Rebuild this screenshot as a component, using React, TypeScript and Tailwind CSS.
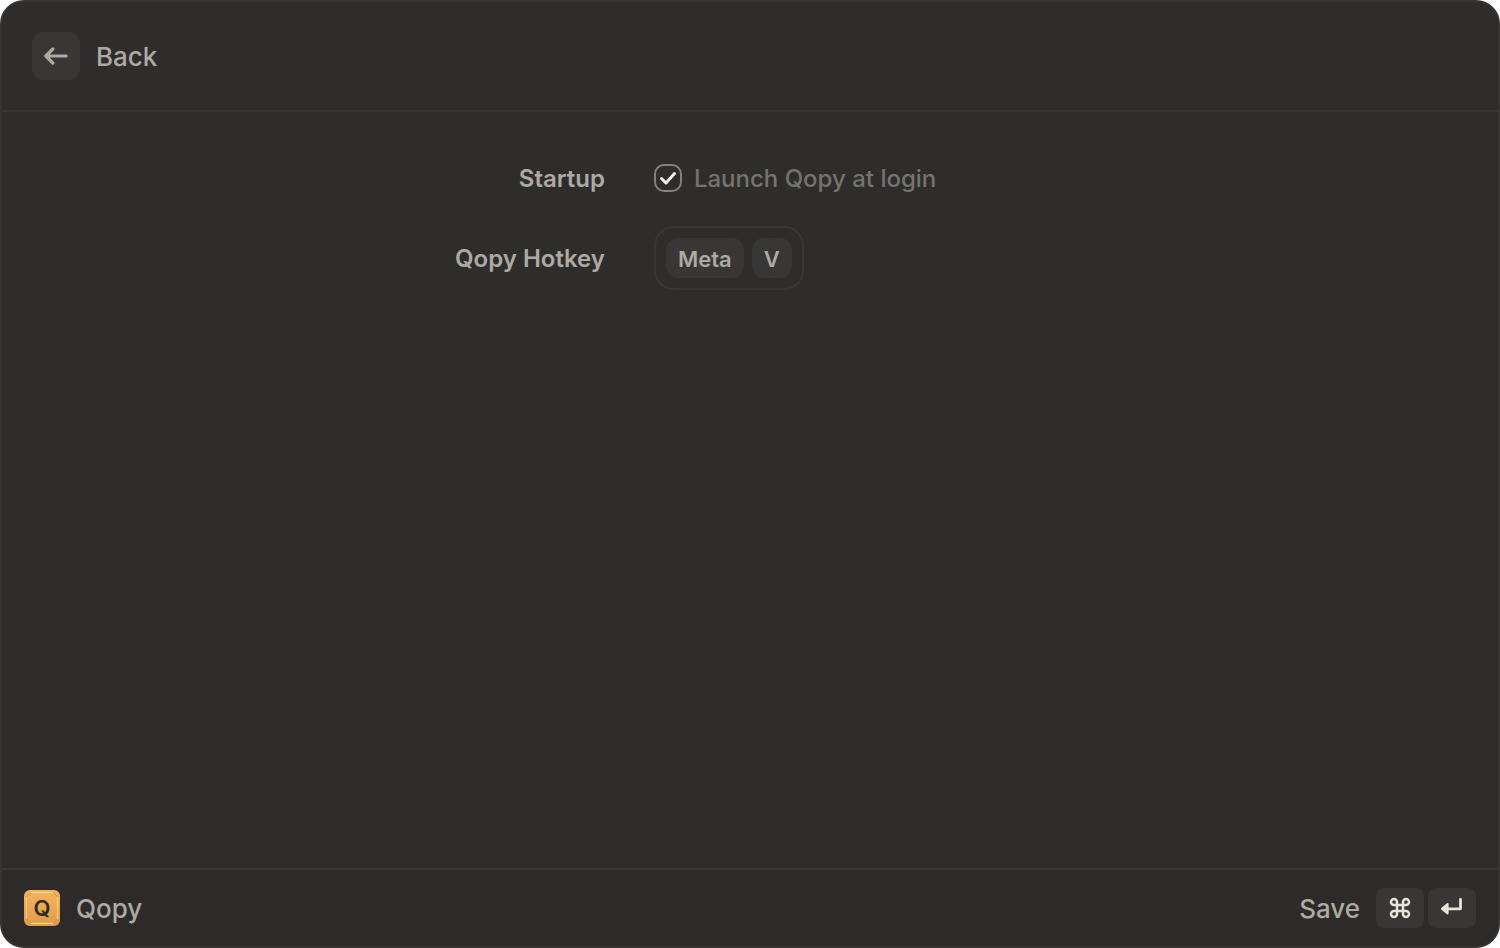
import { useState } from "react";

function BackArrow() {
  return (
    <svg width="24" height="18" viewBox="0 0 24 18" fill="none" stroke="currentColor" strokeWidth="3.2" strokeLinecap="round" strokeLinejoin="round" aria-hidden="true">
      <path d="M22.2 9H2M8.8 2L1.8 9L8.8 16" />
    </svg>
  );
}

function CommandIcon() {
  return (
    <svg width="22" height="22" viewBox="0 0 22 22" fill="none" stroke="currentColor" strokeWidth="2.5" aria-hidden="true">
      <path d="M8 8H5A3 3 0 1 1 8 5V17A3 3 0 1 1 5 14H17A3 3 0 1 1 14 17V5A3 3 0 1 1 17 8Z" />
    </svg>
  );
}

function ReturnIcon() {
  return (
    <svg width="22" height="20" viewBox="0 0 22 20" fill="none" stroke="currentColor" strokeLinecap="round" strokeLinejoin="round" aria-hidden="true">
      <path d="M19.5 1.4V10.8H7" strokeWidth="2.8" />
      <path d="M6.6 6V15.6L0.8 10.8Z" fill="currentColor" strokeWidth="2" />
    </svg>
  );
}

function QopyLogo() {
  return (
    <svg width="36" height="36" viewBox="0 0 36 36" role="img" aria-label="Qopy logo">
      <defs>
        <linearGradient id="tile" x1="0" y1="0" x2="0" y2="1">
          <stop offset="0" stopColor="#f6b45e" />
          <stop offset="1" stopColor="#e09d49" />
        </linearGradient>
      </defs>
      <rect width="36" height="36" rx="6" fill="url(#tile)" />
      <path d="M6.5 2.5L2.5 6.5M29.5 2.5L33.5 6.5M2.5 29.5L6.5 33.5M33.5 29.5L29.5 33.5" fill="none" stroke="#cf9047" />
      <path d="M7 2.5H29M7 33.5H29" stroke="#ffdc9c" />
      <path d="M2.5 7V29M33.5 7V29" stroke="#fbcb82" />
      <text x="18" y="26" textAnchor="middle" fontFamily="Inter, sans-serif" fontSize="22" fontWeight="600" fill="#302b23">
        Q
      </text>
    </svg>
  );
}

export default function App() {
  const [launch, setLaunch] = useState(true);

  return (
    <div className="min-h-screen bg-white font-['Inter',sans-serif]">
      <div className="flex min-h-screen flex-col overflow-hidden rounded-3xl border-2 border-[#363533] bg-[#2e2d2b] text-[#adaaa4]">
        <header className="flex items-center border-b-2 border-[#383735] p-[30px]">
          <button type="button" className="flex items-center gap-4 text-[26px] leading-10 font-medium">
            <span className="flex size-12 items-center justify-center rounded-xl bg-[#383735]">
              <BackArrow />
            </span>
            <span className="pt-0.5">Back</span>
          </button>
        </header>

        <main className="grid flex-1 grid-cols-[5fr_7fr] content-start items-center gap-x-[49px] gap-y-8 pt-[50px] text-2xl leading-[30px]">
          <div className="pt-0.5 text-right font-semibold">Startup</div>
          <label className="flex items-center gap-3 font-medium text-[#75736e]">
            <span className="grid size-7 place-items-center">
              <input
                type="checkbox"
                checked={launch}
                onChange={(e) => setLaunch(e.target.checked)}
                className="col-start-1 row-start-1 size-7 appearance-none rounded-[10px] border-2 border-[#85827d]"
              />
              {launch && (
                <svg className="pointer-events-none col-start-1 row-start-1" width="18" height="14" viewBox="0 0 18 14" fill="none" stroke="#f0ede6" strokeWidth="3" strokeLinecap="round" strokeLinejoin="round" aria-hidden="true">
                  <path d="M2.5 7.5L7 12L15.5 2.5" />
                </svg>
              )}
            </span>
            <span className="pt-0.5">Launch Qopy at login</span>
          </label>

          <div className="pt-0.5 text-right font-semibold">Qopy Hotkey</div>
          <div className="flex">
            <button type="button" aria-label="Qopy hotkey: Meta V" className="flex gap-2 rounded-[20px] border-2 border-[#383735] p-2.5 text-[22px] font-semibold">
              <kbd className="h-10 rounded-xl bg-[#383735] px-3 font-['Inter',sans-serif] leading-[42px]">Meta</kbd>
              <kbd className="h-10 rounded-xl bg-[#383735] px-3 font-['Inter',sans-serif] leading-[42px]">V</kbd>
            </button>
          </div>
        </main>

        <footer className="flex items-center justify-between border-t-2 border-[#383735] bg-[#2d2a29] px-[22px] py-[18px] text-[26px] leading-[38px] font-medium">
          <div className="flex items-center gap-4">
            <QopyLogo />
            <span className="pt-0.5">Qopy</span>
          </div>
          <button type="button" className="flex items-center gap-4">
            <span className="pt-0.5">Save</span>
            <span className="flex gap-1 text-[#e8e4da]">
              <kbd className="flex h-10 w-12 items-center justify-center rounded-lg bg-[#383735]">
                <CommandIcon />
              </kbd>
              <kbd className="flex h-10 w-12 items-center justify-center rounded-lg bg-[#383735]">
                <ReturnIcon />
              </kbd>
            </span>
          </button>
        </footer>
      </div>
    </div>
  );
}
